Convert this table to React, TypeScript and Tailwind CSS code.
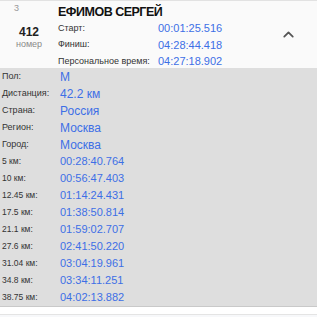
import { ChevronUp } from "lucide-react";

const HEAD_TIMES = [
  ["Старт:", "00:01:25.516"],
  ["Финиш:", "04:28:44.418"],
  ["Персональное время:", "04:27:18.902"],
];

const INFO = [
  ["Пол:", "М"],
  ["Дистанция:", "42.2 км"],
  ["Страна:", "Россия"],
  ["Регион:", "Москва"],
  ["Город:", "Москва"],
];

const SPLITS = [
  ["5 км:", "00:28:40.764"],
  ["10 км:", "00:56:47.403"],
  ["12.45 км:", "01:14:24.431"],
  ["17.5 км:", "01:38:50.814"],
  ["21.1 км:", "01:59:02.707"],
  ["27.6 км:", "02:41:50.220"],
  ["31.04 км:", "03:04:19.961"],
  ["34.8 км:", "03:34:11.251"],
  ["38.75 км:", "04:02:13.882"],
];

export default function App() {
  return (
    <div className="w-[317px] h-[317px] overflow-hidden bg-[#f7f8fa] font-['Liberation_Sans',Arial,sans-serif]">
      {/* runner header */}
      <div className="relative flex h-[68px] border-t border-[#e2e2e2] bg-[#fafafa]">
        <div className="w-[58px] shrink-0 flex flex-col items-center">
          <span className="self-start ml-[14px] mt-[2px] text-[9px] leading-[10px] text-[#999]">3</span>
          <span className="mt-[12px] text-[12px] leading-[14px] font-bold text-[#222]">412</span>
          <span className="text-[9px] leading-[11px] text-[#8a8a8a]">номер</span>
        </div>
        <div className="flex flex-col">
          <div className="mt-[4px] text-[12.5px] leading-[15px] font-bold tracking-[-0.5px] text-[#111]">ЕФИМОВ СЕРГЕЙ</div>
          {HEAD_TIMES.map(([k, v]) => (
            <div key={k} className="flex items-center h-[17px]">
              <span className="w-[100px] text-[9px] text-[#333]">{k}</span>
              <span className="text-[11px] text-[#3d6fe6]">{v}</span>
            </div>
          ))}
        </div>
        <ChevronUp className="absolute left-[280px] top-[25px] w-[17px] h-[17px] text-[#555]" strokeWidth={2.5} />
      </div>

      {/* details */}
      <div className="bg-[#dedede] border-b border-[#c9c9c9]">
        {[...INFO, ...SPLITS].map(([k, v], i) => (
          <div key={k + i} className="flex items-center h-[17px]">
            <span className={`w-[60px] pl-[2px] ${i < 5 ? "text-[9px]" : "text-[8.5px]"} text-[#333]`}>{k}</span>
            <span className={`${i < 5 ? "text-[12px]" : "text-[11px]"} text-[#3d6fe6]`}>{v}</span>
          </div>
        ))}
      </div>
      <div className="h-[8px] bg-white border-b border-[#e4e4e4]" />
    </div>
  );
}
